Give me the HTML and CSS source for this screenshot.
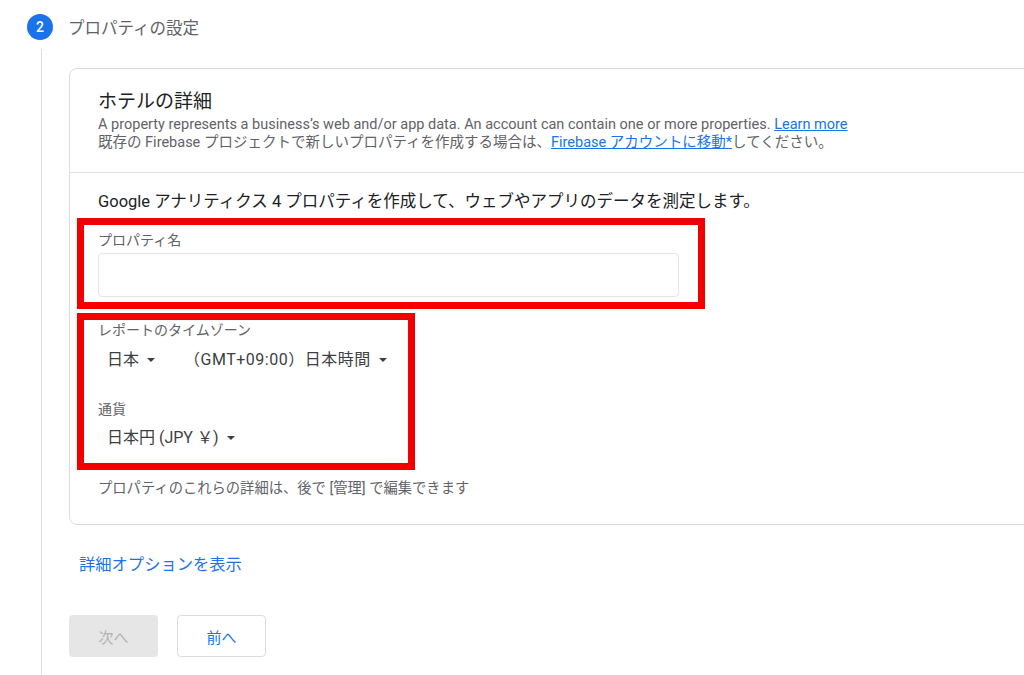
FILE: index.html
```html
<!DOCTYPE html>
<html lang="ja">
<head>
<meta charset="utf-8">
<title>プロパティの設定</title>
<link rel="stylesheet" href="styles.css">
</head>
<body>
<div class="step">
  <div class="step-head">
    <span class="step-num">2</span>
    <span class="step-title">プロパティの設定</span>
  </div>
  <div class="step-body">
    <div class="card">
      <div class="card-head">
        <h2 class="card-title">ホテルの詳細</h2>
        <p class="sub">A property represents a business’s web and/or app data. An account can contain one or more properties. <a class="link" href="#">Learn more</a></p>
        <p class="sub">既存の Firebase プロジェクトで新しいプロパティを作成する場合は、<a class="link" href="#">Firebase アカウントに移動*</a>してください。</p>
      </div>
      <div class="card-body">
        <p class="lead">Google アナリティクス 4 プロパティを作成して、ウェブやアプリのデータを測定します。</p>
        <div class="mark mark-name">
          <div class="label">プロパティ名</div>
          <div class="input"></div>
        </div>
        <div class="mark mark-tz">
          <div class="label">レポートのタイムゾーン</div>
          <div class="selects">
            <span class="select">日本<span class="caret"></span></span>
            <span class="select select-tz">（GMT+09:00）日本時間<span class="caret"></span></span>
          </div>
          <div class="label label-cur">通貨</div>
          <div class="selects selects-cur">
            <span class="select">日本円 (JPY ￥)<span class="caret"></span></span>
          </div>
        </div>
        <p class="note">プロパティのこれらの詳細は、後で [管理] で編集できます</p>
      </div>
    </div>
    <a class="more" href="#">詳細オプションを表示</a>
    <div class="buttons">
      <button class="btn btn-next" type="button">次へ</button>
      <button class="btn btn-prev" type="button">前へ</button>
    </div>
  </div>
</div>
</body>
</html>
```

FILE: styles.css
```css
html, body {
  margin: 0;
  padding: 0;
  background: #fff;
  overflow: hidden;
}
body {
  font-family: Roboto, "Noto Sans CJK JP", sans-serif;
  color: #202124;
  width: 1024px;
  height: 675px;
}
p, h2 { margin: 0; }

.step-head {
  display: flex;
  align-items: center;
  padding: 14px 0 0 27px;
  height: 26px;
}
.step-num {
  width: 26px;
  height: 26px;
  border-radius: 50%;
  background: #1a73e8;
  color: #fff;
  font-size: 14px;
  font-weight: 500;
  display: flex;
  align-items: center;
  justify-content: center;
}
.step-title {
  margin-left: 15px;
  font-size: 16.5px;
  color: #5f6368;
}
.step-body {
  margin: 9px 0 0 41px;
  padding: 19px 0 20px 27px;
  border-left: 1px solid #dadce0;
}

.card {
  width: 1000px;
  border: 1px solid #dadce0;
  border-radius: 8px;
}
.card-head {
  padding: 21px 28px 20px;
  border-bottom: 1px solid #e3e3e3;
}
.card-title {
  font-size: 19px;
  font-weight: 400;
  line-height: 24px;
  margin-bottom: 2px;
}
.sub {
  font-size: 14.5px;
  line-height: 18px;
  color: #5f6368;
  white-space: nowrap;
}
.link {
  color: #1a73e8;
  text-decoration: underline;
}
.card-body {
  padding: 18px 28px 26px;
}
.lead {
  font-size: 16.5px;
  line-height: 22px;
  white-space: nowrap;
}
.mark {
  border: 7px solid #f20000;
  margin-left: -21px;
  padding: 0 14px;
  box-sizing: border-box;
}
.mark-name {
  width: 628px;
  margin-top: 5px;
  padding-top: 5px;
  padding-bottom: 5px;
}
.mark-tz {
  width: 338px;
  margin-top: 4px;
  padding-bottom: 13px;
}
.label {
  font-size: 14px;
  line-height: 20px;
  color: #5f6368;
}
.input {
  margin-top: 3px;
  width: 581px;
  height: 44px;
  box-sizing: border-box;
  border: 1px solid #e4e4e4;
  border-radius: 4px;
}
.selects {
  display: flex;
  gap: 32px;
  margin-top: 8px;
  padding-left: 9px;
  font-size: 16px;
  line-height: 24px;
  color: #3c4043;
}
.select {
  display: inline-flex;
  align-items: center;
  white-space: nowrap;
}
.select-tz {
  margin-left: -3px;
  letter-spacing: 0.5px;
}
.caret {
  margin-left: 8px;
  width: 0;
  height: 0;
  border-left: 4px solid transparent;
  border-right: 4px solid transparent;
  border-top: 4px solid #3c4043;
}
.label-cur { margin-top: 27px; }
.selects-cur { margin-top: 7px; }
.note {
  margin-top: 8px;
  font-size: 14.3px;
  line-height: 20px;
  color: #5f6368;
}

.more {
  display: block;
  margin: 28px 0 0 10px;
  font-size: 16.3px;
  line-height: 24px;
  color: #1a73e8;
  text-decoration: none;
}
.buttons {
  display: flex;
  gap: 19px;
  margin-top: 38px;
}
.btn {
  width: 89px;
  height: 42px;
  border-radius: 4px;
  font-family: Roboto, "Noto Sans CJK JP", sans-serif;
  font-size: 15px;
  padding: 0;
}
.btn-next {
  background: #e6e6e6;
  border: none;
  color: #b2b2b2;
}
.btn-prev {
  background: #fff;
  border: 1px solid #dadce0;
  color: #1a73e8;
}
```
